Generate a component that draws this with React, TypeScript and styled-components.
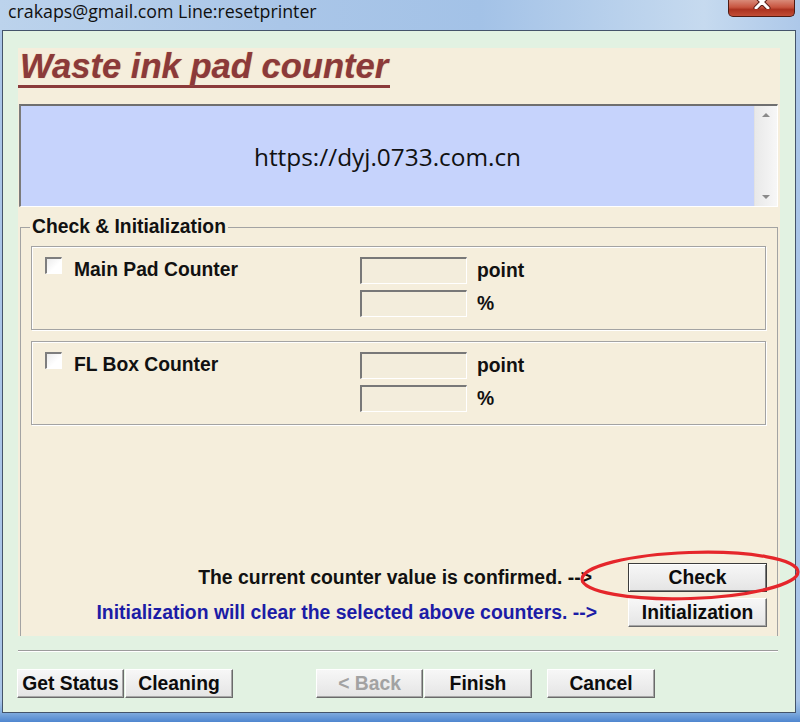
import React from "react";
import styled, { createGlobalStyle } from "styled-components";

const GlobalStyle = createGlobalStyle`
  html, body {
    margin: 0;
    padding: 0;
  }
  body {
    width: 800px;
    height: 722px;
    overflow: hidden;
    font-family: "Liberation Sans", Arial, sans-serif;
  }
  * {
    box-sizing: border-box;
  }
`;

const uiFont = `"Liberation Sans", Arial, sans-serif`;

const Window = styled.div`
  position: relative;
  width: 800px;
  height: 722px;
  display: flex;
  flex-direction: column;
  background: linear-gradient(
    180deg,
    #b4cdea 0px,
    #a9c5e8 40px,
    #a9c5e8 700px,
    #7eaadd 713px,
    #4f86cf 722px
  );
`;

const TitleBar = styled.div`
  height: 30px;
  display: flex;
  align-items: flex-start;
  background: linear-gradient(
    90deg,
    #bcd3ec 0%,
    #aac6e8 35%,
    #a3c2e7 60%,
    #c6daef 88%,
    #adc8e9 100%
  );
`;

const TitleText = styled.div`
  margin-left: 8px;
  padding-top: 1px;
  font-family: "Open Sans", "Noto Sans", sans-serif;
  font-size: 17.8px;
  line-height: 20px;
  color: #101010;
`;

const CloseButton = styled.div`
  margin-left: auto;
  margin-right: 5px;
  width: 67px;
  height: 17px;
  display: flex;
  justify-content: center;
  overflow: hidden;
  border: 1px solid #4e1a12;
  border-top: none;
  border-radius: 0 0 5px 5px;
  background: linear-gradient(180deg, #d98a78 0%, #c85540 45%, #ac3320 60%, #c24d36 100%);
`;

const Client = styled.div`
  flex: 1;
  display: flex;
  flex-direction: column;
  margin: 0 4px 9px 2px;
  padding: 17px 15px 14px 15px;
  border: 1px solid #44546a;
  background: #e2f2e2;
`;

const Panel = styled.div`
  flex: 1;
  display: flex;
  flex-direction: column;
  background: #f5eedc;
`;

const Heading = styled.div`
  align-self: flex-start;
  padding: 0 2px;
  font-family: ${uiFont};
  font-style: italic;
  font-weight: bold;
  font-size: 34.6px;
  line-height: 37px;
  color: #8b3a3a;
  text-shadow: 0 0 1px #d79a72;
  border-bottom: 3px solid #8b3a3a;
`;

const Memo = styled.div`
  margin: 16px 2px 0 1px;
  height: 103px;
  display: flex;
  background: #c6d3fc;
  border-top: 2px solid #6f6f6f;
  border-left: 2px solid #7a7a7a;
  border-right: 1px solid #ffffff;
  border-bottom: 1px solid #ffffff;
`;

const MemoText = styled.div`
  flex: 1;
  display: flex;
  align-items: center;
  justify-content: center;
  font-family: "Open Sans", "Noto Sans", sans-serif;
  font-size: 24.4px;
  color: #111;
`;

const ScrollBar = styled.div`
  width: 23px;
  display: flex;
  flex-direction: column;
  justify-content: space-between;
  background: linear-gradient(90deg, #e9e9e9, #f7f7f7);
  border-left: 1px solid #e2e2e2;
`;

const ScrollButton = styled.div`
  height: 18px;
  display: flex;
  align-items: center;
  justify-content: center;
`;

const Arrow = styled.div<{ $dir: "up" | "down" }>`
  width: 0;
  height: 0;
  border-left: 4px solid transparent;
  border-right: 4px solid transparent;
  ${(p) =>
    p.$dir === "up"
      ? "border-bottom: 4px solid #8a8a8a;"
      : "border-top: 4px solid #8a8a8a;"}
`;

const Group = styled.fieldset`
  flex: 1;
  min-width: 0;
  display: flex;
  flex-direction: column;
  margin: 9px 2px 0 2px;
  padding: 8px 11px 9px 10px;
  border: 1px solid #a3a3a3;
  border-bottom: none;
`;

const Legend = styled.legend`
  margin-left: -1px;
  padding: 0 2px;
  font-family: ${uiFont};
  font-weight: bold;
  font-size: 19.3px;
  line-height: 22px;
  color: #111;
`;

const CounterBox = styled.div`
  display: flex;
  align-items: flex-start;
  padding: 10px 0 12px 13px;
  border: 1px solid #a3a3a3;
  box-shadow: inset 1px 1px 0 #ffffff, 1px 1px 0 #ffffff;

  & + & {
    margin-top: 11px;
  }
`;

const CheckArea = styled.div`
  width: 315px;
  display: flex;
  align-items: flex-start;
`;

const CheckBox = styled.div`
  width: 17px;
  height: 17px;
  border-top: 2px solid #7e7e7e;
  border-left: 2px solid #7e7e7e;
  border-right: 1px solid #ffffff;
  border-bottom: 1px solid #ffffff;
  background: linear-gradient(135deg, #ececec, #ffffff 60%);
`;

const Label = styled.span`
  margin: 2px 0 0 12px;
  font-family: ${uiFont};
  font-weight: bold;
  font-size: 19.3px;
  line-height: 22px;
  color: #111;
`;

const Fields = styled.div`
  display: flex;
  flex-direction: column;
  gap: 6px;
`;

const FieldRow = styled.div`
  display: flex;
  align-items: center;
`;

const Field = styled.div`
  width: 107px;
  height: 27px;
  border-top: 2px solid #787878;
  border-left: 2px solid #787878;
  border-right: 1px solid #ffffff;
  border-bottom: 1px solid #ffffff;
  background: #f3eddc;
`;

const Unit = styled.span`
  margin-left: 10px;
  font-family: ${uiFont};
  font-weight: bold;
  font-size: 19.3px;
  color: #111;
`;

const Actions = styled.div`
  margin-top: auto;
  margin-right: -1px;
  display: flex;
  flex-direction: column;
  gap: 6px;
`;

const ActionRow = styled.div<{ $gap: number }>`
  display: flex;
  justify-content: flex-end;
  align-items: center;
  gap: ${(p) => p.$gap}px;
`;

const ActionText = styled.span<{ $tone?: "blue" }>`
  font-family: ${uiFont};
  font-weight: bold;
  font-size: 19.4px;
  color: ${(p) => (p.$tone === "blue" ? "#1c1ca6" : "#111")};
`;

const Button = styled.button<{ $w: number; $default?: boolean }>`
  width: ${(p) => p.$w}px;
  height: 29px;
  padding: 0;
  font-family: ${uiFont};
  font-weight: bold;
  font-size: 19.3px;
  color: #0c0c0c;
  background: linear-gradient(180deg, #f7f7f7 0%, #ececec 60%, #e4e4e4 100%);
  border: 1px solid;
  border-color: ${(p) =>
    p.$default ? "#3c3c3c #3c3c3c #3c3c3c #3c3c3c" : "#ffffff #6a6a6a #6a6a6a #ffffff"};
  box-shadow: ${(p) =>
    p.$default
      ? "inset 1px 1px 0 #ffffff, inset -1px -1px 0 #7a7a7a"
      : "inset -1px -1px 0 #a6a6a6"};

  &:disabled {
    color: #a2a2a2;
  }
`;

const Separator = styled.div`
  margin: 14px 2px 0 0;
  height: 2px;
  border-top: 1px solid #9c9c9c;
  border-bottom: 1px solid #ffffff;
`;

const Footer = styled.div`
  margin: 17px 0 0 -1px;
  display: flex;
`;

const ButtonPair = styled.div<{ $offset?: number }>`
  display: flex;
  gap: 1px;
  margin-left: ${(p) => p.$offset ?? 0}px;
`;

const Highlight = styled.svg`
  position: absolute;
  left: 576px;
  top: 548px;
  width: 224px;
  height: 56px;
  pointer-events: none;
`;

const counters = ["Main Pad Counter", "FL Box Counter"];

export default function App() {
  return (
    <>
      <GlobalStyle />
      <Window>
        <TitleBar>
          <TitleText>crakaps@gmail.com Line:resetprinter</TitleText>
          <CloseButton>
            <svg width="20" height="14" viewBox="0 0 20 14" style={{ marginTop: -5 }}>
              <path d="M4 1 L16 13 M16 1 L4 13" stroke="#5a1f18" strokeWidth="5" strokeLinecap="round" />
              <path d="M4 1 L16 13 M16 1 L4 13" stroke="#ffffff" strokeWidth="3" strokeLinecap="round" />
            </svg>
          </CloseButton>
        </TitleBar>
        <Client>
          <Panel>
            <Heading>Waste ink pad counter</Heading>
            <Memo>
              <MemoText>https://dyj.0733.com.cn</MemoText>
              <ScrollBar>
                <ScrollButton>
                  <Arrow $dir="up" />
                </ScrollButton>
                <ScrollButton>
                  <Arrow $dir="down" />
                </ScrollButton>
              </ScrollBar>
            </Memo>
            <Group>
              <Legend>Check &amp; Initialization</Legend>
              {counters.map((name) => (
                <CounterBox key={name}>
                  <CheckArea>
                    <CheckBox />
                    <Label>{name}</Label>
                  </CheckArea>
                  <Fields>
                    <FieldRow>
                      <Field />
                      <Unit>point</Unit>
                    </FieldRow>
                    <FieldRow>
                      <Field />
                      <Unit>%</Unit>
                    </FieldRow>
                  </Fields>
                </CounterBox>
              ))}
              <Actions>
                <ActionRow $gap={36}>
                  <ActionText>The current counter value is confirmed. --&gt;</ActionText>
                  <Button $w={139} $default>
                    Check
                  </Button>
                </ActionRow>
                <ActionRow $gap={31}>
                  <ActionText $tone="blue">
                    Initialization will clear the selected above counters. --&gt;
                  </ActionText>
                  <Button $w={139}>Initialization</Button>
                </ActionRow>
              </Actions>
            </Group>
          </Panel>
          <Separator />
          <Footer>
            <ButtonPair>
              <Button $w={107}>Get Status</Button>
              <Button $w={108}>Cleaning</Button>
            </ButtonPair>
            <ButtonPair $offset={83}>
              <Button $w={107} disabled>
                &lt; Back
              </Button>
              <Button $w={108}>Finish</Button>
            </ButtonPair>
            <ButtonPair $offset={15}>
              <Button $w={108}>Cancel</Button>
            </ButtonPair>
          </Footer>
        </Client>
        <Highlight viewBox="0 0 224 56">
          <ellipse
            cx="114"
            cy="27.5"
            rx="108"
            ry="23"
            transform="rotate(-2 114 27.5)"
            fill="none"
            stroke="#e5262b"
            strokeWidth="3.2"
          />
        </Highlight>
      </Window>
    </>
  );
}
